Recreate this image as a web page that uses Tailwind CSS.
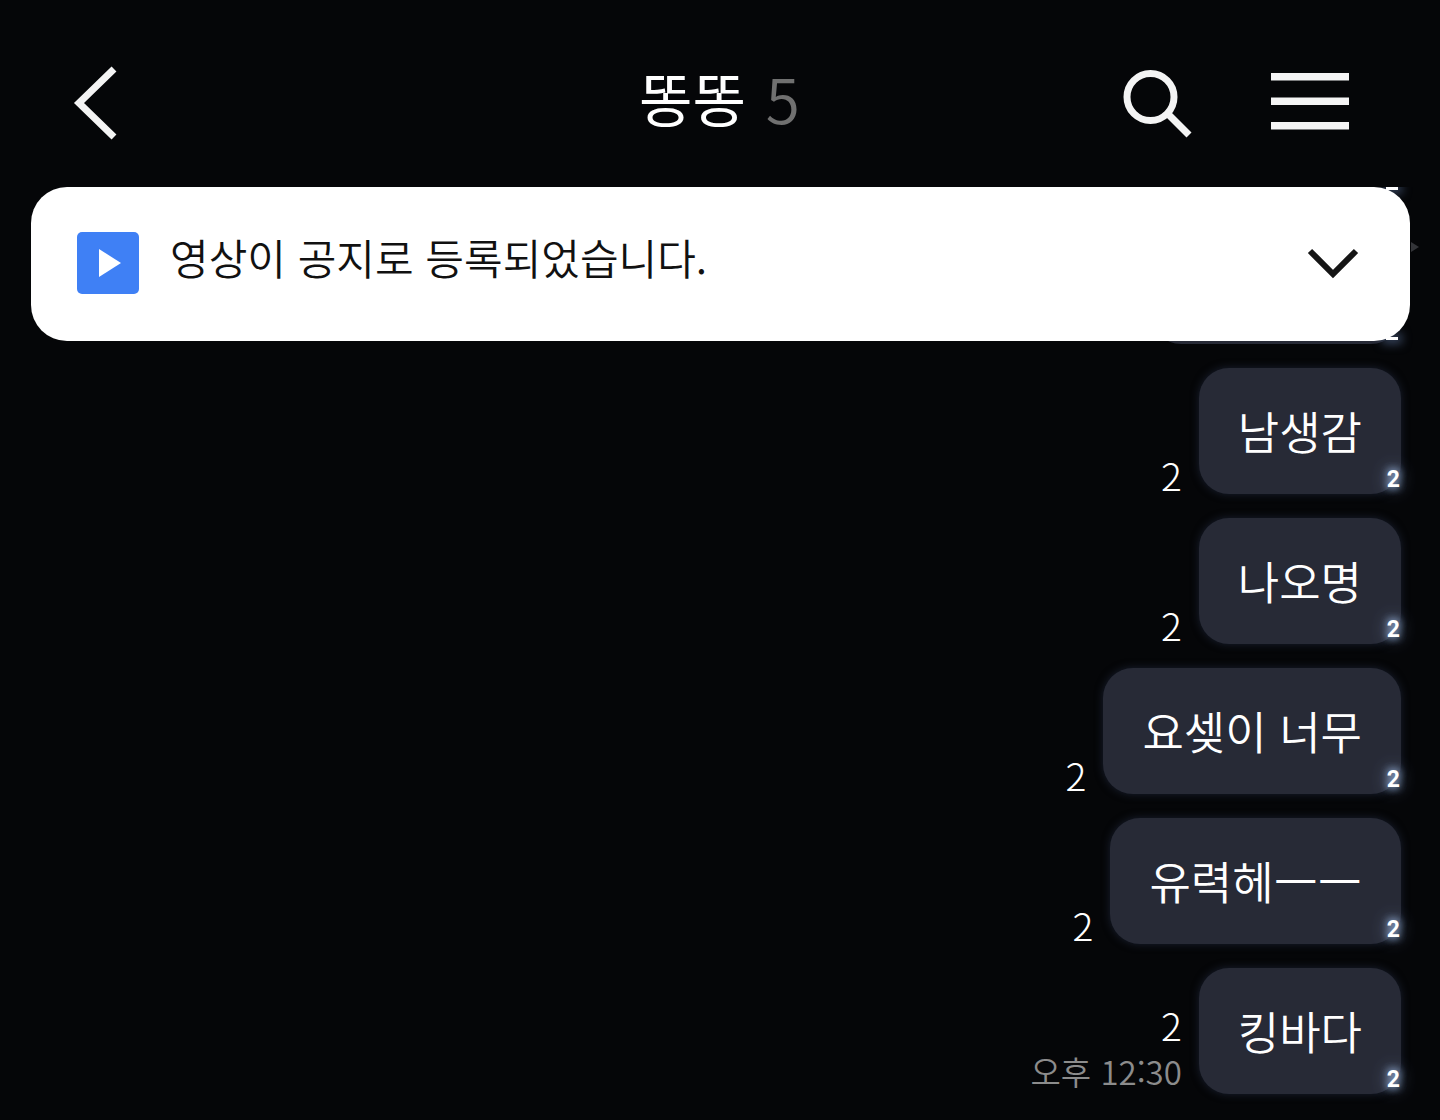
<!DOCTYPE html>
<html lang="ko">
<head>
    <meta charset="UTF-8">
    <meta name="viewport" content="width=device-width, initial-scale=1.0">
    <title>똥똥</title>
    <script src="https://cdn.jsdelivr.net/npm/@tailwindcss/browser@4"></script>
</head>
<body class="flex flex-col h-screen bg-[#050608] text-white font-[350] font-['Noto_Sans_CJK_KR',sans-serif]">
    <header class="grid grid-cols-[1fr_auto_1fr] items-center shrink-0 h-[187px] pt-[19px] pl-[72px] pr-[91px]">
        <button type="button" aria-label="뒤로" class="justify-self-start">
            <svg class="w-[48px] h-[80px]" viewBox="0 0 48 80" fill="none" stroke="#f4f4f4" stroke-width="7">
                <path d="M42 6 7 40l35 34"/>
            </svg>
        </button>
        <h1 class="flex items-center gap-5 pl-[18px] pb-3 text-[58px] leading-[72px] font-normal">똥똥 <span class="text-[62px] text-[#707070] font-[350]">5</span></h1>
        <div class="flex items-center justify-end gap-[78px]">
            <button type="button" aria-label="검색">
                <svg class="w-[72px] h-[72px]" viewBox="0 0 72 72" fill="none" stroke="#f4f4f4">
                    <circle cx="29.500" cy="30" r="23.5" stroke-width="7"/>
                    <path d="m46 46 22 22" stroke-width="7"/>
                </svg>
            </button>
            <button type="button" aria-label="메뉴">
                <svg class="w-[78px] h-[60px]" viewBox="0 0 78 60" fill="#f4f4f4">
                    <path d="M0 0h78v7.500H0zM0 24.500h78V32H0zM0 49h78v7.500H0z"/>
                </svg>
            </button>
        </div>
    </header>

    <main class="relative flex flex-col grow justify-end overflow-hidden pb-[26px]">
        <!-- pinned notice, floats over the messages -->
        <section class="absolute z-10 left-[31px] right-[30px] top-0 flex items-center h-[154px] pl-[46px] pr-[50px] pb-[2px] rounded-[36px] bg-white text-[#111111]">
            <svg class="shrink-0 w-[62px] h-[62px]" viewBox="0 0 62 62">
                <rect width="62" height="62" rx="5" fill="#3f80f5"/>
                <path d="m22 17 22 14-22 14z" fill="#fff"/>
            </svg>
            <p class="grow pl-[31px] pb-3 text-[42px] leading-[60px]">영상이 공지로 등록되었습니다.</p>
            <button type="button" aria-label="펼치기">
                <svg class="w-[54px] h-[34px]" viewBox="0 0 54 34" fill="none" stroke="#151515" stroke-width="6">
                    <path d="m4 5 23 23L50 5"/>
                </svg>
            </button>
        </section>

        <ul class="flex flex-col items-end gap-6 pr-[39px] text-[45px] leading-[60px]">
            <li class="relative w-[202px] h-[126px] rounded-[30px]">
                <div class="absolute right-[3px] bottom-[4px] w-3 h-[3px] bg-white shadow-[0_0_10px_4px_#35425a]"></div>
            </li>
            <li class="relative w-[250px] h-[126px] rounded-[30px] bg-[#272a36]">
                <svg class="absolute -right-[18px] top-[24px] w-[8px] h-[10px]" viewBox="0 0 8 10"><path d="m0 0 8 5-8 5z" fill="#333438"/></svg>
                <div class="absolute right-[3px] bottom-[4px] w-3 h-[3px] bg-white shadow-[0_0_10px_4px_#35425a]"></div>
            </li>
            <li class="flex items-end gap-[17px]">
                <span class="text-[39px] leading-[40px] font-light">2</span>
                <p class="relative px-[39px] py-[33px] rounded-[30px] bg-[#272a36] shadow-[0_0_8px_#1a2030]">남생감
                    <span class="absolute right-px bottom-0 text-[23px] leading-7 font-bold font-['Roboto'] [text-shadow:0_0_8px_#8fa8d0,0_0_8px_#8fa8d0,0_0_18px_#8fa8d0]">2</span>
                </p>
            </li>
            <li class="flex items-end gap-[17px]">
                <span class="text-[39px] leading-[40px] font-light">2</span>
                <p class="relative px-[39px] py-[33px] rounded-[30px] bg-[#272a36] shadow-[0_0_8px_#1a2030]">나오명
                    <span class="absolute right-px bottom-0 text-[23px] leading-7 font-bold font-['Roboto'] [text-shadow:0_0_8px_#8fa8d0,0_0_8px_#8fa8d0,0_0_18px_#8fa8d0]">2</span>
                </p>
            </li>
            <li class="flex items-end gap-[17px]">
                <span class="text-[39px] leading-[40px] font-light">2</span>
                <p class="relative px-[39px] py-[33px] rounded-[30px] bg-[#272a36] shadow-[0_0_8px_#1a2030]">요셎이 너무
                    <span class="absolute right-px bottom-0 text-[23px] leading-7 font-bold font-['Roboto'] [text-shadow:0_0_8px_#8fa8d0,0_0_8px_#8fa8d0,0_0_18px_#8fa8d0]">2</span>
                </p>
            </li>
            <li class="flex items-end gap-[17px]">
                <span class="text-[39px] leading-[40px] font-light">2</span>
                <p class="relative px-[39px] py-[33px] rounded-[30px] bg-[#272a36] shadow-[0_0_8px_#1a2030]">유력헤<span class="text-[48px] leading-none">ㅡㅡ</span>
                    <span class="absolute right-px bottom-0 text-[23px] leading-7 font-bold font-['Roboto'] [text-shadow:0_0_8px_#8fa8d0,0_0_8px_#8fa8d0,0_0_18px_#8fa8d0]">2</span>
                </p>
            </li>
            <li class="flex items-end gap-[17px]">
                <div class="flex flex-col items-end">
                    <span class="text-[39px] leading-[48px] font-light">2</span>
                    <time class="text-[33px] leading-[46px] text-[#8c8c8c]">오후 12:30</time>
                </div>
                <p class="relative px-[39px] py-[33px] rounded-[30px] bg-[#272a36] shadow-[0_0_8px_#1a2030]">킹바다
                    <span class="absolute right-px bottom-0 text-[23px] leading-7 font-bold font-['Roboto'] [text-shadow:0_0_8px_#8fa8d0,0_0_8px_#8fa8d0,0_0_18px_#8fa8d0]">2</span>
                </p>
            </li>
        </ul>
    </main>
</body>
</html>
